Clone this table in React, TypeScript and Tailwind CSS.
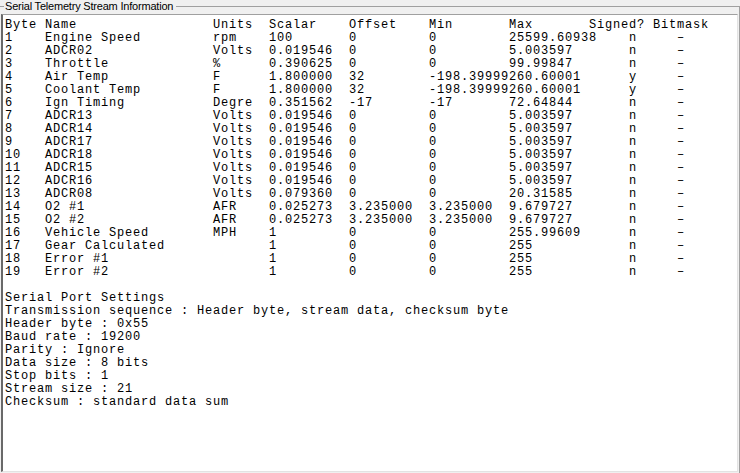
import React from "react";

const STARTS = [0, 5, 26, 33, 43, 53, 63, 78, 84];

function line(fields: string[], starts: number[] = STARTS): string {
  let s = "";
  fields.forEach((f, i) => {
    const c = starts[i];
    if (s.length < c) s = s.padEnd(c, " ");
    s += f;
  });
  return s.replace(/\s+$/, "");
}

type Row = [string, string, string, string, string, string, string, string];

const rows: Row[] = [
  ["1", "Engine Speed", "rpm", "100", "0", "0", "25599.60938", "n"],
  ["2", "ADCR02", "Volts", "0.019546", "0", "0", "5.003597", "n"],
  ["3", "Throttle", "%", "0.390625", "0", "0", "99.99847", "n"],
  ["4", "Air Temp", "F", "1.800000", "32", "-198.39999", "260.60001", "y"],
  ["5", "Coolant Temp", "F", "1.800000", "32", "-198.39999", "260.60001", "y"],
  ["6", "Ign Timing", "Degre", "0.351562", "-17", "-17", "72.64844", "n"],
  ["7", "ADCR13", "Volts", "0.019546", "0", "0", "5.003597", "n"],
  ["8", "ADCR14", "Volts", "0.019546", "0", "0", "5.003597", "n"],
  ["9", "ADCR17", "Volts", "0.019546", "0", "0", "5.003597", "n"],
  ["10", "ADCR18", "Volts", "0.019546", "0", "0", "5.003597", "n"],
  ["11", "ADCR15", "Volts", "0.019546", "0", "0", "5.003597", "n"],
  ["12", "ADCR16", "Volts", "0.019546", "0", "0", "5.003597", "n"],
  ["13", "ADCR08", "Volts", "0.079360", "0", "0", "20.31585", "n"],
  ["14", "O2 #1", "AFR", "0.025273", "3.235000", "3.235000", "9.679727", "n"],
  ["15", "O2 #2", "AFR", "0.025273", "3.235000", "3.235000", "9.679727", "n"],
  ["16", "Vehicle Speed", "MPH", "1", "0", "0", "255.99609", "n"],
  ["17", "Gear Calculated", "", "1", "0", "0", "255", "n"],
  ["18", "Error #1", "", "1", "0", "0", "255", "n"],
  ["19", "Error #2", "", "1", "0", "0", "255", "n"],
];

const lines: string[] = [
  line(
    ["Byte", "Name", "Units", "Scalar", "Offset", "Min", "Max", "Signed?", "Bitmask"],
    [0, 5, 26, 33, 43, 53, 63, 73, 81]
  ),
  ...rows.map((r) => line([...r, "–"])),
  "",
  "Serial Port Settings",
  "Transmission sequence : Header byte, stream data, checksum byte",
  "Header byte : 0x55",
  "Baud rate : 19200",
  "Parity : Ignore",
  "Data size : 8 bits",
  "Stop bits : 1",
  "Stream size : 21",
  "Checksum : standard data sum",
];

export default function App() {
  return (
    <div className="relative h-[473px] w-[740px] overflow-hidden bg-[#f0f0f0]">
      <div className="absolute left-0 top-[6px] h-[467px] w-[740px] border-r border-t border-[#a0a0a0]" />
      <div className="absolute left-[4px] top-0 bg-[#f0f0f0] pl-[1px] pr-[3px] text-[11px] leading-[13px] tracking-[-0.2px] text-black [font-family:'Liberation_Sans',Arial,sans-serif]">
        Serial Telemetry Stream Information
      </div>
      <div className="absolute left-[1px] top-[14px] flex h-[458px] w-[737px] flex-col border-b border-l-2 border-r border-t border-b-[#e3e3e3] border-l-[#696969] border-r-[#e3e3e3] border-t-[#a0a0a0] bg-white pl-[2px] pt-[4px]">
        {lines.map((l, i) => (
          <div
            key={i}
            className="h-[13px] whitespace-pre text-[12px] leading-[13px] tracking-[0.8px] text-black [font-family:'Liberation_Mono','Courier_New',monospace]"
          >
            {l}
          </div>
        ))}
      </div>
    </div>
  );
}
